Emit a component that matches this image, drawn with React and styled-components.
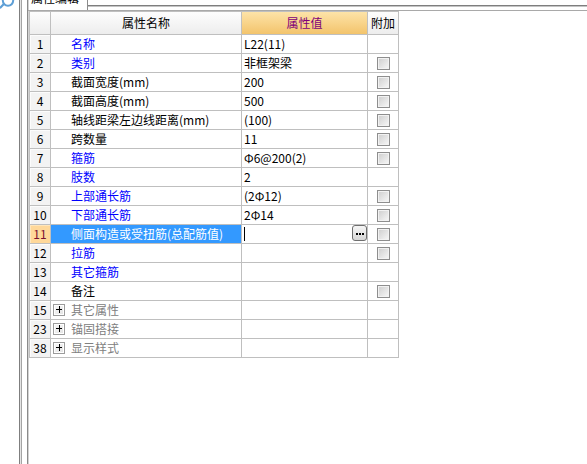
import React from 'react';
import styled, { createGlobalStyle, css } from 'styled-components';

const Global = createGlobalStyle`
  html, body { margin: 0; padding: 0; background: #fff; }
  body {
    font-family: "Noto Sans CJK SC", "Noto Sans", sans-serif;
    font-size: 12px;
    color: #000;
  }
  #root { height: 464px; }
`;

const Frame = styled.div`
  display: flex;
  width: 587px;
  height: 464px;
  overflow: hidden;
  background: #fff;
`;

const Rail = styled.div`
  flex: none;
  width: 19px;
`;

const Splitter = styled.div`
  flex: none;
  width: 3px;
  box-sizing: border-box;
  border-left: 1px solid #7f7f7f;
  border-right: 1px solid #a4a4a4;
  background: #e4e4e4;
`;

const Gap = styled.div`
  flex: none;
  width: 5px;
`;

const Main = styled.div`
  flex: 1;
  display: flex;
  flex-direction: column;
  border-left: 1px solid #8a8a8a;
  box-shadow: inset 1px 0 0 #d2d2d2;
  min-width: 0;
`;

const TabStrip = styled.div`
  flex: none;
  height: 10px;
  display: flex;
  align-items: flex-start;
`;

const Tab = styled.div`
  flex: none;
  width: 60px;
  height: 10px;
  box-sizing: border-box;
  border-right: 1px solid #8c8c8c;
  overflow: hidden;
  padding-left: 3px;
`;

const TabLabel = styled.div`
  line-height: 12px;
  margin-top: -8px;
  white-space: nowrap;
`;

const TabRest = styled.div`
  flex: 1;
  height: 5px;
  border-bottom: 1px solid #7e7e7e;
  box-shadow: 0 1px 0 #c4c4c4;
`;

const Panel = styled.div`
  flex: 1;
  border-top: 1px solid #a9a9a9;
`;

const Table = styled.div`
  width: 370px;
  margin-left: 1px;
  box-sizing: border-box;
  border-left: 1px solid #bfbfbf;
  border-top: 1px solid #bfbfbf;
`;

const Row = styled.div`
  display: grid;
  grid-template-columns: 21px 191px 126px 31px;
  height: ${(p) => (p.$header ? 23 : 19)}px;
`;

const cellBase = css`
  box-sizing: border-box;
  border-right: 1px solid #bfbfbf;
  border-bottom: 1px solid #bfbfbf;
  display: flex;
  align-items: center;
  overflow: hidden;
  white-space: nowrap;
  line-height: 14px;
`;

const HeadCell = styled.div`
  ${cellBase};
  justify-content: center;
  background: ${(p) =>
    p.$accent
      ? 'linear-gradient(#fde3a8, #f3c46c)'
      : 'linear-gradient(#fdfdfd, #ededed)'};
  color: ${(p) => (p.$accent ? '#80007a' : '#000')};
`;

const NumCell = styled.div`
  ${cellBase};
  justify-content: center;
  background: ${(p) => (p.$active ? '#ffd899' : '#f3f3f3')};
  color: ${(p) => (p.$active ? '#7a1132' : '#000')};
  box-shadow: inset 1px 1px 0 ${(p) => (p.$active ? '#ffe6bb' : '#fcfcfc')};
`;

const toneColor = { blue: '#0000ff', black: '#000', gray: '#808080' };

const NameCell = styled.div`
  ${cellBase};
  padding-left: ${(p) => (p.$group ? 2 : 20)}px;
  background: ${(p) => (p.$active ? '#3399ff' : '#fff')};
  color: ${(p) => (p.$active ? '#fff' : toneColor[p.$tone])};
`;

const ValueCell = styled.div`
  ${cellBase};
  position: relative;
  padding-left: 2px;
`;

const AttachCell = styled.div`
  ${cellBase};
  justify-content: center;
`;

const Check = styled.span`
  display: block;
  width: 13px;
  height: 13px;
  box-sizing: border-box;
  border: 1px solid #8e8e8e;
  background: linear-gradient(135deg, #cdcdcd, #f8f8f8);
  box-shadow: inset 0 0 0 1px #f2f2f2;
`;

const PlusBox = styled.span`
  position: relative;
  flex: none;
  width: 12px;
  height: 12px;
  box-sizing: border-box;
  border: 1px solid #9c9c9c;
  background: linear-gradient(135deg, #f8f8f8, #e2e2e2);
  box-shadow: inset 0 0 0 1px #fff;
  margin-right: 6px;
  &::before, &::after {
    content: '';
    position: absolute;
    background: #000;
  }
  &::before { left: 2px; top: 4px; width: 6px; height: 1px; }
  &::after { left: 5px; top: 1px; width: 1px; height: 7px; }
`;

const Caret = styled.span`
  display: block;
  width: 1px;
  height: 14px;
  background: #000;
`;

const EllipsisButton = styled.span`
  position: absolute;
  right: 0;
  top: 0;
  width: 15px;
  height: 16px;
  box-sizing: border-box;
  border: 1px solid #6f6f6f;
  border-radius: 3px;
  background: linear-gradient(#f6f6f6, #d6d6d6);
  display: flex;
  align-items: center;
  justify-content: center;
  gap: 1px;
  padding-top: 1px;
  & > i {
    display: block;
    width: 2px;
    height: 2px;
    background: #000;
  }
`;

const rows = [
  { n: '1', name: '名称', tone: 'blue', value: 'L22(11)', check: false },
  { n: '2', name: '类别', tone: 'blue', value: '非框架梁', check: true },
  { n: '3', name: '截面宽度(mm)', tone: 'black', value: '200', check: true },
  { n: '4', name: '截面高度(mm)', tone: 'black', value: '500', check: true },
  { n: '5', name: '轴线距梁左边线距离(mm)', tone: 'black', value: '(100)', check: true },
  { n: '6', name: '跨数量', tone: 'black', value: '11', check: true },
  { n: '7', name: '箍筋', tone: 'blue', value: 'Φ6@200(2)', check: true },
  { n: '8', name: '肢数', tone: 'blue', value: '2', check: false },
  { n: '9', name: '上部通长筋', tone: 'blue', value: '(2Φ12)', check: true },
  { n: '10', name: '下部通长筋', tone: 'blue', value: '2Φ14', check: true },
  { n: '11', name: '侧面构造或受扭筋(总配筋值)', tone: 'blue', value: '', check: true, active: true },
  { n: '12', name: '拉筋', tone: 'blue', value: '', check: true },
  { n: '13', name: '其它箍筋', tone: 'blue', value: '', check: false },
  { n: '14', name: '备注', tone: 'black', value: '', check: true },
  { n: '15', name: '其它属性', tone: 'gray', value: '', check: false, group: true },
  { n: '23', name: '锚固搭接', tone: 'gray', value: '', check: false, group: true },
  { n: '38', name: '显示样式', tone: 'gray', value: '', check: false, group: true },
];

function SearchGlyph() {
  return (
    <svg width="15" height="9" viewBox="0 0 15 9" style={{ display: 'block' }}>
      <circle cx="8" cy="0.5" r="5.2" fill="none" stroke="#5e9fd6" strokeWidth="2" />
      <line x1="3.6" y1="4.2" x2="0.5" y2="7.5" stroke="#5e9fd6" strokeWidth="2.2" strokeLinecap="round" />
    </svg>
  );
}

export default function App() {
  return (
    <>
      <Global />
      <Frame>
        <Rail>
          <SearchGlyph />
        </Rail>
        <Splitter />
        <Gap />
        <Main>
          <TabStrip>
            <Tab>
              <TabLabel>属性编辑</TabLabel>
            </Tab>
            <TabRest />
          </TabStrip>
          <Panel>
            <Table>
              <Row $header>
                <HeadCell />
                <HeadCell>属性名称</HeadCell>
                <HeadCell $accent>属性值</HeadCell>
                <HeadCell>附加</HeadCell>
              </Row>
              {rows.map((r) => (
                <Row key={r.n}>
                  <NumCell $active={r.active}>{r.n}</NumCell>
                  <NameCell $tone={r.tone} $active={r.active} $group={r.group}>
                    {r.group && <PlusBox />}
                    {r.name}
                  </NameCell>
                  <ValueCell>
                    {r.active ? (
                      <>
                        <Caret />
                        <EllipsisButton>
                          <i />
                          <i />
                          <i />
                        </EllipsisButton>
                      </>
                    ) : (
                      r.value
                    )}
                  </ValueCell>
                  <AttachCell>{r.check && <Check />}</AttachCell>
                </Row>
              ))}
            </Table>
          </Panel>
        </Main>
      </Frame>
    </>
  );
}
